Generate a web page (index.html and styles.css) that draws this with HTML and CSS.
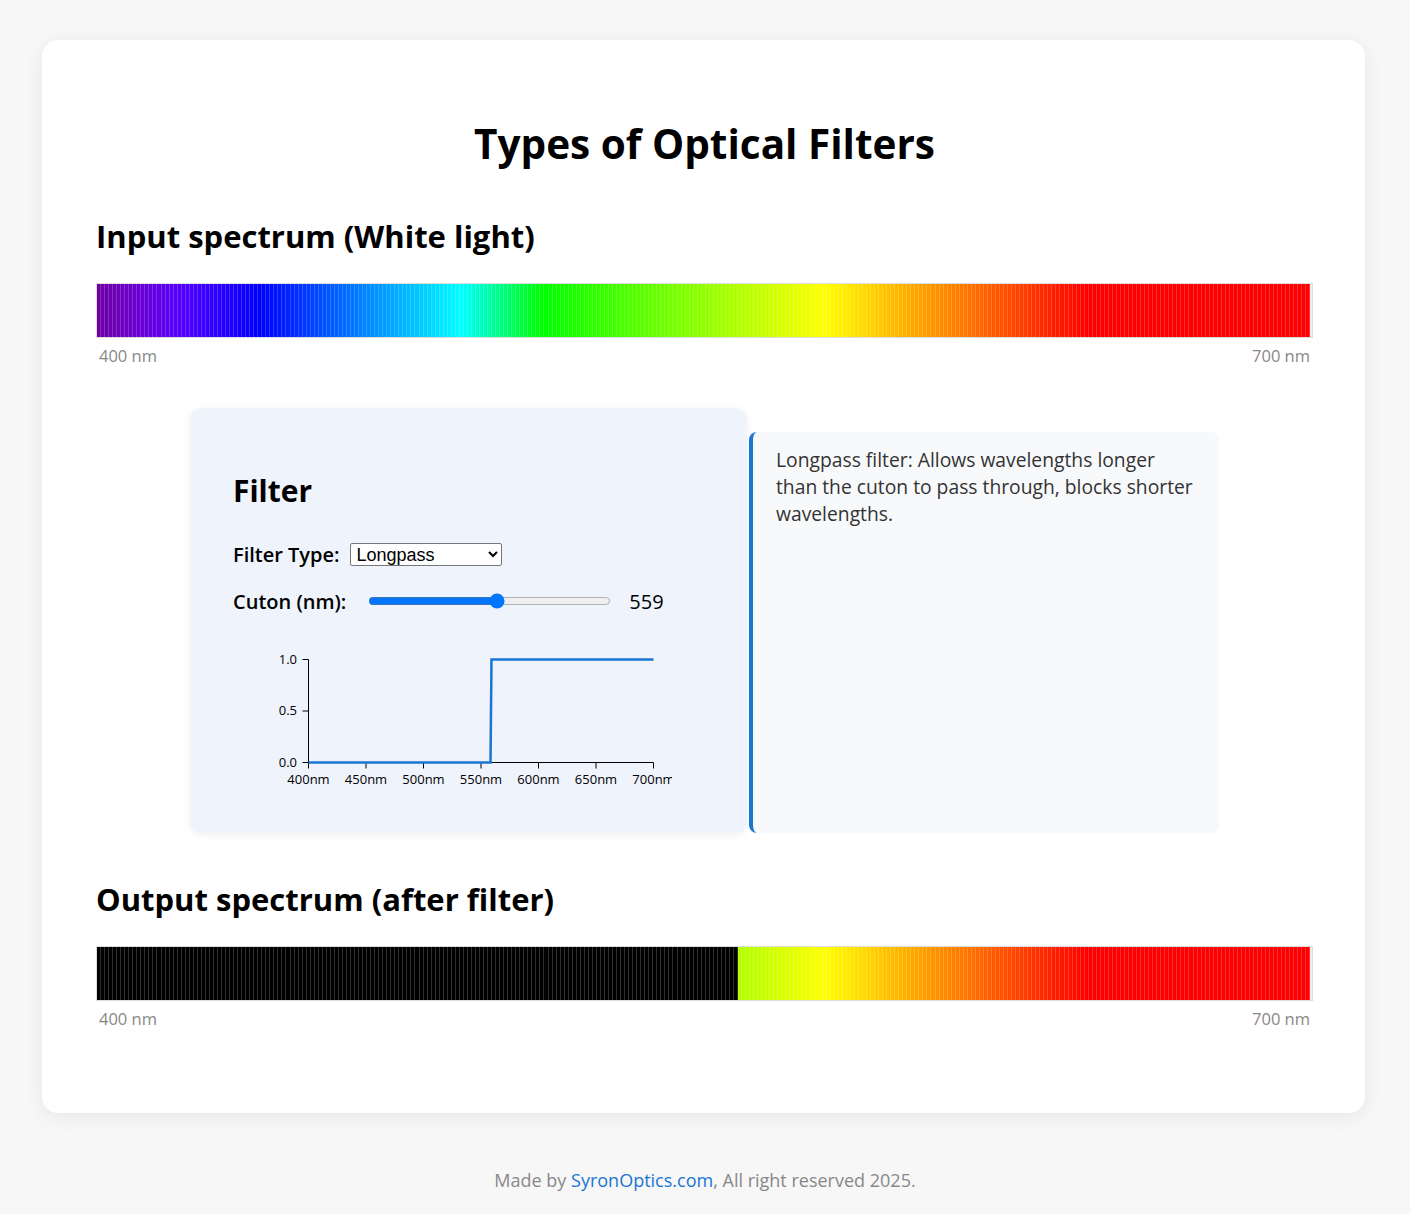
FILE: index.html
```html
<!DOCTYPE html>
<html lang="en">
<head>
<meta charset="utf-8">
<title>Types of Optical Filters</title>
<link rel="stylesheet" href="styles.css">
</head>
<body>
<main class="card">
  <h1 class="title">Types of Optical Filters</h1>

  <section class="spectrum-section">
    <h2 class="section-title">Input spectrum (White light)</h2>
    <div class="spectrum" id="input-spectrum"></div>
    <div class="spectrum-labels"><span>400 nm</span><span>700 nm</span></div>
  </section>

  <section class="filter-row">
    <div class="filter-panel">
      <h3 class="filter-title">Filter</h3>
      <div class="control control-type">
        <label class="control-label" for="ftype">Filter Type:</label>
        <select id="ftype" class="select">
          <option>Longpass</option>
          <option>Shortpass</option>
          <option>Bandpass</option>
          <option>Notch</option>
        </select>
      </div>
      <div class="control control-range">
        <label class="control-label" for="cuton">Cuton (nm):</label>
        <input id="cuton" class="range" type="range" min="400" max="700" value="559">
        <span class="range-value">559</span>
      </div>
      <svg class="chart" width="440" height="160" viewBox="0 0 440 160">
        <g class="axis" stroke="#000" stroke-width="1" fill="none">
          <path d="M70.5 24.5H76.5V127.5H70.5"/>
          <line x1="70.5" y1="76" x2="76.5" y2="76"/>
          <path d="M76.5 133.5V127.5H421.5V133.5"/>
          <line x1="134" y1="127.5" x2="134" y2="133.5"/>
          <line x1="191.5" y1="127.5" x2="191.5" y2="133.5"/>
          <line x1="249" y1="127.5" x2="249" y2="133.5"/>
          <line x1="306.5" y1="127.5" x2="306.5" y2="133.5"/>
          <line x1="364" y1="127.5" x2="364" y2="133.5"/>
        </g>
        <g class="tick-y" font-size="13" text-anchor="end">
          <text x="65" y="29">1.0</text>
          <text x="65" y="80">0.5</text>
          <text x="65" y="132">0.0</text>
        </g>
        <g class="tick-x" font-size="13" text-anchor="middle">
          <text x="76.5" y="149">400nm</text>
          <text x="134" y="149">450nm</text>
          <text x="191.5" y="149">500nm</text>
          <text x="249" y="149">550nm</text>
          <text x="306.5" y="149">600nm</text>
          <text x="364" y="149">650nm</text>
          <text x="421.5" y="149">700nm</text>
        </g>
        <path class="curve" d="M76.5 127.5H258.5L259.5 24.5H421.5" fill="none" stroke="#1976d2" stroke-width="2.5"/>
      </svg>
    </div>
    <div class="description">
      <p>Longpass filter: Allows wavelengths longer than the cuton to pass through, blocks shorter wavelengths.</p>
    </div>
  </section>

  <section class="spectrum-section">
    <h2 class="section-title">Output spectrum (after filter)</h2>
    <div class="spectrum" id="output-spectrum"></div>
    <div class="spectrum-labels"><span>400 nm</span><span>700 nm</span></div>
  </section>
</main>
<footer class="footer">Made by <a class="footer-link" href="#">SyronOptics.com</a>, All right reserved 2025.</footer>
<script src="script.js"></script>
</body>
</html>
```

FILE: styles.css
```css
* { box-sizing: border-box; }
body {
  margin: 0;
  background: #f7f7f7;
  font-family: "Open Sans", "Noto Sans", sans-serif;
  color: #000;
}
.card {
  width: 1323px;
  margin: 40px 0 0 42px;
  background: #fff;
  border-radius: 16px;
  box-shadow: 0 4px 20px rgba(0,0,0,0.07);
  padding: 80px 52px 83px 54px;
}
.title {
  margin: 0 0 49px;
  text-align: center;
  font-size: 40.5px;
  font-weight: 700;
  line-height: 1.2;
}
.section-title {
  margin: 0 0 28px;
  font-size: 31px;
  font-weight: 700;
  line-height: 1.2;
}
.spectrum {
  display: flex;
  height: 55px;
  border: 1px solid #ddd;
  background: #eee;
}
.spectrum .band {
  flex: 1 1 0;
  box-shadow: inset -1px 0 rgba(255,255,255,0.18);
}
.spectrum-labels {
  display: flex;
  justify-content: space-between;
  padding: 6px 3px 0 3px;
  font-size: 16.5px;
  color: #888;
}
.filter-row {
  display: flex;
  justify-content: center;
  gap: 2px;
  margin: 41px 0 48px;
}
.filter-panel {
  width: 557px;
  background: #eff3fb;
  border-radius: 12px;
  box-shadow: 0 2px 8px rgba(0,0,0,0.06);
  padding: 65px 43px 38px;
}
.filter-title {
  margin: 0 0 32px;
  font-size: 30px;
  font-weight: 700;
  line-height: 1.2;
}
.control {
  display: flex;
  align-items: center;
  gap: 10px;
  margin-bottom: 20px;
}
.control-label {
  font-size: 20px;
  font-weight: 600;
}
.select {
  width: 152px;
  height: 23px;
  font-family: "Liberation Sans", Arial, sans-serif;
  font-size: 18px;
  line-height: 21px;
  border: 1px solid #767676;
  border-radius: 2px;
  background: #fff;
  padding: 0 2px;
  color: #000;
}
.range {
  width: 243px;
  margin: 0 8px 0 12px;
  accent-color: #0075ff;
}
.range-value { font-size: 20px; }
.chart {
  display: block;
  margin: 8px 0 0 -1px;
  overflow: hidden;
}
.chart text { font-family: "Open Sans", "Noto Sans", sans-serif; fill: #000; }
.description {
  width: 470px;
  margin-top: 24px;
  background: #f8f9fb;
  border-left: 4px solid #1976d2;
  border-radius: 8px;
  padding: 14px 18px 16px 23px;
}
.description p {
  margin: 0;
  font-size: 19.3px;
  line-height: 27px;
  color: #333;
}
.footer {
  text-align: center;
  padding: 55px 0 20px;
  font-size: 18px;
  color: #888;
}
.footer-link { color: #1976d2; text-decoration: none; }
```

FILE: script.js
```js
function waveToRgb(w) {
  var r = 0, g = 0, b = 0;
  if (w >= 380 && w < 440) { r = -(w - 440) / 60; b = 1; }
  else if (w < 490) { g = (w - 440) / 50; b = 1; }
  else if (w < 510) { g = 1; b = -(w - 510) / 20; }
  else if (w < 580) { r = (w - 510) / 70; g = 1; }
  else if (w < 645) { r = 1; g = -(w - 645) / 65; }
  else { r = 1; }
  var f = 1;
  if (w < 420) f = 0.3 + 0.7 * (w - 380) / 40;
  else if (w > 700) f = 0.3 + 0.7 * (780 - w) / 80;
  function c(v) { return Math.round(255 * v * f); }
  return 'rgb(' + c(r) + ',' + c(g) + ',' + c(b) + ')';
}
function build(id, cuton) {
  var el = document.getElementById(id);
  for (var w = 400; w <= 700; w++) {
    var d = document.createElement('div');
    d.className = 'band';
    d.style.background = (cuton && w < cuton) ? '#000' : waveToRgb(w);
    el.appendChild(d);
  }
}
build('input-spectrum', 0);
build('output-spectrum', 559);
```
